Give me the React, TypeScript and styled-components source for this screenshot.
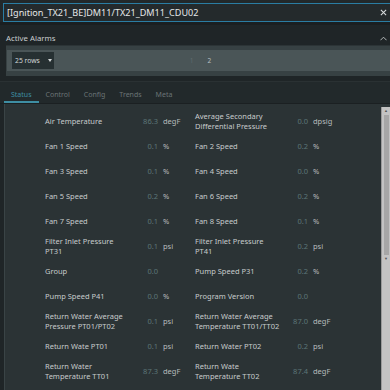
import React from 'react';
import styled, { createGlobalStyle } from 'styled-components';

const GlobalStyle = createGlobalStyle`
  html, body {
    margin: 0;
    padding: 0;
    background: #1f2527;
  }
  body {
    font-family: "Noto Sans", "Liberation Sans", sans-serif;
  }
`;

type Field = { label: string; value: string; unit?: string };

// two fields per row, left then right. \n marks where the label wraps
const fields: Field[] = [
  { label: 'Air Temperature', value: '86.3', unit: 'degF' },
  { label: 'Average Secondary\nDifferential Pressure', value: '0.0', unit: 'dpsig' },
  { label: 'Fan 1 Speed', value: '0.1', unit: '%' },
  { label: 'Fan 2 Speed', value: '0.2', unit: '%' },
  { label: 'Fan 3 Speed', value: '0.1', unit: '%' },
  { label: 'Fan 4 Speed', value: '0.0', unit: '%' },
  { label: 'Fan 5 Speed', value: '0.2', unit: '%' },
  { label: 'Fan 6 Speed', value: '0.2', unit: '%' },
  { label: 'Fan 7 Speed', value: '0.1', unit: '%' },
  { label: 'Fan 8 Speed', value: '0.1', unit: '%' },
  { label: 'Filter Inlet Pressure\nPT31', value: '0.1', unit: 'psi' },
  { label: 'Filter Inlet Pressure\nPT41', value: '0.2', unit: 'psi' },
  { label: 'Group', value: '0.0' },
  { label: 'Pump Speed P31', value: '0.2', unit: '%' },
  { label: 'Pump Speed P41', value: '0.0', unit: '%' },
  { label: 'Program Version', value: '0.0' },
  { label: 'Return Water Average\nPressure PT01/PT02', value: '0.1', unit: 'psi' },
  { label: 'Return Water Average\nTemperature TT01/TT02', value: '87.0', unit: 'degF' },
  { label: 'Return Wate PT01', value: '0.1', unit: 'psi' },
  { label: 'Return Water PT02', value: '0.2', unit: 'psi' },
  { label: 'Return Water\nTemperature TT01', value: '87.3', unit: 'degF' },
  { label: 'Return Wate\nTemperature TT02', value: '87.4', unit: 'degF' },
];

const tabs = ['Status', 'Control', 'Config', 'Trends', 'Meta'];

const App = () => {
  return (
    <Page>
      <GlobalStyle />
      <Header>
        <PathInput>
          <span>[Ignition_TX21_BE]DM11/TX21_DM11_CDU02</span>
          <CloseIcon viewBox="0 0 8 8">
            <path d="M1 1 L7 7 M7 1 L1 7" stroke="#d8dcdd" strokeWidth="1.2" />
          </CloseIcon>
        </PathInput>
      </Header>

      <Alarms>
        <AlarmsTitle>
          <span>Active Alarms</span>
          <Chevron viewBox="0 0 8 5">
            <path d="M0.5 4.5 L4 1 L7.5 4.5" stroke="#c7cbcc" strokeWidth="1" fill="none" />
          </Chevron>
        </AlarmsTitle>
        <AlarmBox>
          <PagerStrip>
            <RowsSelect>
              <span>25 rows</span>
              <Caret />
            </RowsSelect>
            <Pages>
              <PageNum>1</PageNum>
              <PageNum $active>2</PageNum>
            </Pages>
          </PagerStrip>
        </AlarmBox>
      </Alarms>

      <TabBar>
        {tabs.map((t, i) => (
          <Tab key={t} $active={i === 0}>{t}</Tab>
        ))}
      </TabBar>

      <Panel>
        <FieldGrid>
          {fields.map((f) => (
            <FieldRow key={f.label}>
              <Label>{f.label}</Label>
              <Value>{f.value}</Value>
              <Unit>{f.unit}</Unit>
            </FieldRow>
          ))}
        </FieldGrid>
        <ScrollBar>
          <ScrollArrow>▲</ScrollArrow>
          <ScrollThumb />
          <ScrollArrow>▼</ScrollArrow>
        </ScrollBar>
      </Panel>
    </Page>
  );
};
export default App;

const Page = styled.div`
  width: 390px;
  height: 390px;
  overflow: hidden;
  display: flex;
  flex-direction: column;
  background: #1f2527;
`;

const Header = styled.div`
  display: flex;
  padding: 3px 0 0 3px;
  height: 25px;
  box-sizing: border-box;
  background: #22282a;
  border-bottom: 3px solid #1a1f21;
`;

const PathInput = styled.div`
  flex: 1;
  height: 19px;
  box-sizing: border-box;
  border: 1px solid #2a7da3;
  border-right: none;
  display: flex;
  align-items: center;
  padding: 0 3px 0 3px;
  background: #242a2c;
  color: #e4e7e8;
  font-size: 9.1px;
`;

const CloseIcon = styled.svg`
  width: 7px;
  height: 7px;
  margin-left: auto;
`;

const Alarms = styled.div`
  padding: 0 0 0 6px;
  background: #1f2527;
`;

const AlarmsTitle = styled.div`
  display: flex;
  align-items: center;
  height: 20px;
  box-sizing: border-box;
  padding: 6px 3px 0 0;
  color: #c9cdce;
  font-size: 7.8px;
`;

const Chevron = styled.svg`
  width: 7px;
  height: 5px;
  margin-left: auto;
`;

const AlarmBox = styled.div`
  background: #374143;
  padding: 4px 0 5px 1px;
  border-top: 1px solid #2c3436;
`;

const PagerStrip = styled.div`
  position: relative;
  display: flex;
  align-items: center;
  height: 21px;
  background: #4a5557;
  padding-left: 5px;
`;

const RowsSelect = styled.div`
  display: flex;
  align-items: center;
  width: 42px;
  height: 17px;
  box-sizing: border-box;
  padding-left: 3px;
  background: #263032;
  color: #d2d6d7;
  font-size: 6.8px;
`;

const Caret = styled.span`
  margin-left: 8px;
  width: 0;
  height: 0;
  border-left: 2.5px solid transparent;
  border-right: 2.5px solid transparent;
  border-top: 3px solid #d2d6d7;
`;

const Pages = styled.div`
  position: absolute;
  left: 0;
  right: 0;
  display: flex;
  justify-content: center;
  gap: 14px;
  padding-left: 4px;
  pointer-events: none;
`;

const PageNum = styled.span<{ $active?: boolean }>`
  font-size: 6.5px;
  color: ${(p) => (p.$active ? '#b9c0c1' : '#5f6b6d')};
`;

const TabBar = styled.div`
  display: flex;
  align-items: stretch;
  height: 23px;
  box-sizing: border-box;
  margin-top: 5px;
  padding-left: 4px;
  border-top: 1px solid #2a3133;
  background: #22292b;
  border-bottom: 1px solid #1b2022;
`;

const Tab = styled.div<{ $active?: boolean }>`
  display: flex;
  align-items: center;
  padding: 6px 7px 0;
  font-size: 7px;
  color: ${(p) => (p.$active ? '#3e8ea3' : '#6b7476')};
  border-bottom: 2px solid ${(p) => (p.$active ? '#3e8ea3' : 'transparent')};
`;

const Panel = styled.div`
  flex: 1;
  display: flex;
  margin-left: 4px;
  background: #2b3335;
  border-left: 1px solid #3a4446;
  min-height: 0;
`;

const FieldGrid = styled.div`
  flex: 1;
  display: grid;
  grid-template-columns: 150px 150px;
  grid-auto-rows: 25px;
  align-content: start;
  padding: 4px 0 0 40px;
`;

const FieldRow = styled.div`
  display: grid;
  grid-template-columns: 85px 28px 37px;
  align-items: center;
`;

const Label = styled.div`
  color: #c7cbcc;
  font-size: 7.5px;
  line-height: 10px;
  white-space: pre-line;
`;

const Value = styled.div`
  color: #5d7678;
  font-size: 7.5px;
  text-align: right;
`;

const Unit = styled.div`
  color: #b7bcbd;
  font-size: 7.5px;
  padding-left: 5px;
`;

const ScrollBar = styled.div`
  width: 8px;
  margin: 3px 0 0 0;
  display: flex;
  flex-direction: column;
  align-items: center;
  background: #c3c3c3;
  border-left: 1px solid #9a9a9a;
`;

const ScrollArrow = styled.div`
  font-size: 4px;
  line-height: 8px;
  color: #555;
`;

const ScrollThumb = styled.div`
  flex: 0 0 140px;
  width: 5px;
  background: #a6a6a6;
`;
